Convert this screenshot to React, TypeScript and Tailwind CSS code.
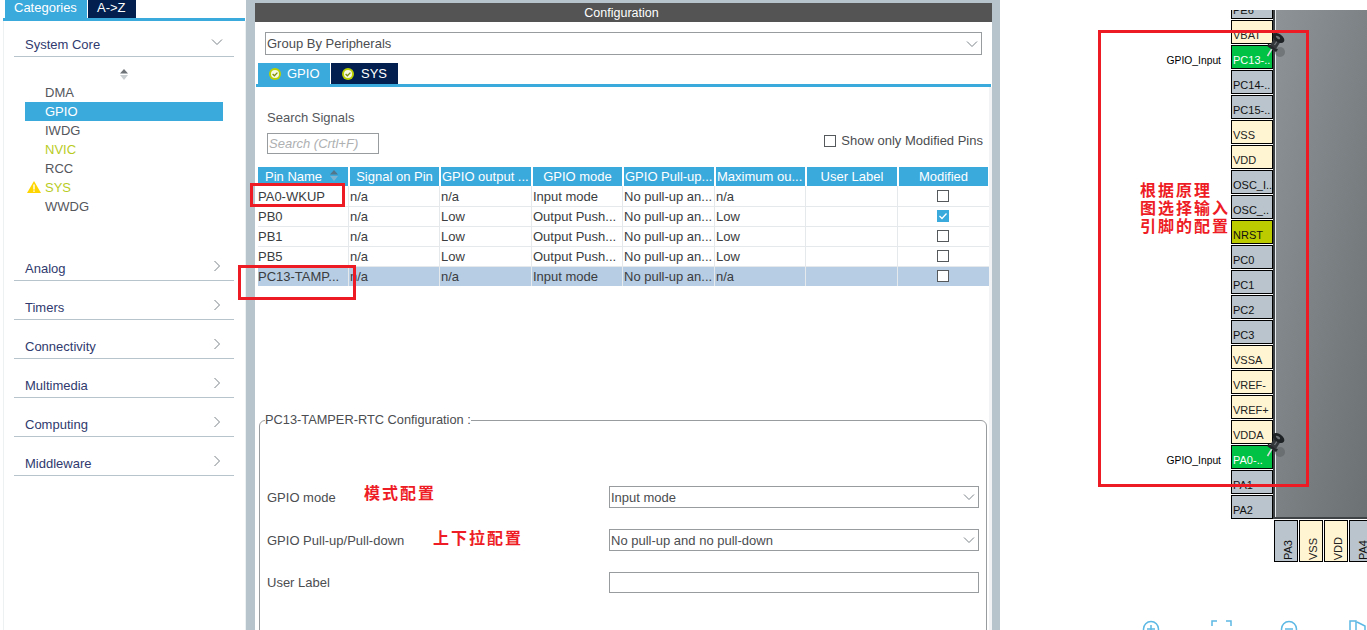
import React from "react";

const FONT = { fontFamily: '"Liberation Sans", Arial, sans-serif' };
const CJK = { fontFamily: '"Noto Sans CJK SC", "Liberation Serif", serif' };

function Chevron({ dir }: { dir: "down" | "right" }) {
  return (
    <svg width="12" height="12" viewBox="0 0 12 12" fill="none" stroke="#7d8388" strokeWidth="1" className="shrink-0">
      {dir === "down" ? <polyline points="1,3.5 6,8.5 11,3.5" /> : <polyline points="3.5,1 8.5,6 3.5,11" />}
    </svg>
  );
}

function CheckBadge() {
  return (
    <svg width="12" height="12" viewBox="0 0 12 12" className="shrink-0">
      <circle cx="6" cy="6" r="6" fill="#bcd200" />
      <circle cx="6" cy="6" r="4" fill="#f7f9e2" />
      <polyline points="3.6,6 5.4,7.8 8.4,4.6" fill="none" stroke="#7f8f10" strokeWidth="1.3" />
    </svg>
  );
}

function Checkbox({ checked }: { checked?: boolean }) {
  return checked ? (
    <span className="flex h-[12px] w-[12px] items-center justify-center bg-[#3aa9dc]">
      <svg width="10" height="10" viewBox="0 0 10 10" fill="none" stroke="#ffffff" strokeWidth="1.3">
        <polyline points="1.5,5 4,7.5 8.5,2.5" />
      </svg>
    </span>
  ) : (
    <span className="block h-[12px] w-[12px] border border-[#55595c] bg-white" />
  );
}

function Section({ title }: { title: string }) {
  return (
    <div className="flex h-[39px] items-end justify-between border-b border-[#b8c4cc] pb-[3px] pl-[11px] pr-[11px] text-[13px] text-[#303a6e]">
      <span className="leading-[16px]">{title}</span>
      <span className="mb-[5px]">
        <Chevron dir="right" />
      </span>
    </div>
  );
}

const items: [string, string][] = [
  ["DMA", "text-[#54565c]"],
  ["GPIO", "bg-[#3aa9dc] text-white"],
  ["IWDG", "text-[#54565c]"],
  ["NVIC", "text-[#b9cc1f]"],
  ["RCC", "text-[#54565c]"],
  ["SYS", "text-[#b9cc1f]"],
  ["WWDG", "text-[#54565c]"],
];

function Sidebar() {
  return (
    <aside className="h-full w-[246px] shrink-0 bg-white pl-[3px]">
      <div className="flex h-[18px] gap-[1px] pl-[2px] text-[13px] leading-[15px] text-white">
        <div className="w-[82px] bg-[#3aa9dc] pl-[9px]">Categories</div>
        <div className="w-[48px] bg-[#021f50] pl-[9px]">A-&gt;Z</div>
      </div>
      <div className="h-[3px] w-[242px] bg-[#3aa9dc]" />
      <div className="h-[609px] w-[243px] border-x border-[#eef1f2] pl-[10px] pr-[11px]">
        <div className="flex h-[36px] items-end justify-between border-b border-[#b8c4cc] pb-[3px] pl-[11px] pr-[11px] text-[13px] text-[#303a6e]">
          <span className="leading-[16px]">System Core</span>
          <span className="mb-[5px]">
            <Chevron dir="down" />
          </span>
        </div>
        <div className="h-[185px] pl-[11px]">
          <div className="flex h-[26px] w-[198px] items-center justify-center pt-[8px]">
            <svg width="10" height="11" viewBox="0 0 10 11">
              <polygon points="5,0 9,4.5 1,4.5" fill="#6d7377" />
              <polygon points="5,11 9,6 1,6" fill="#c9ced1" />
            </svg>
          </div>
          {items.map(([name, cls]) => (
            <div key={name} className={`relative h-[19px] w-[198px] pl-[20px] text-[13px] leading-[19px] ${cls}`}>
              {name === "SYS" && (
                <svg width="14" height="12" viewBox="0 0 14 12" className="absolute left-[2px] top-[3px]">
                  <polygon points="7,0 14,12 0,12" fill="#ffd500" />
                  <rect x="6.3" y="3.5" width="1.4" height="5" fill="#ffffff" />
                  <rect x="6.3" y="9.4" width="1.4" height="1.4" fill="#ffffff" />
                </svg>
              )}
              {name}
            </div>
          ))}
        </div>
        {["Analog", "Timers", "Connectivity", "Multimedia", "Computing", "Middleware"].map((t) => (
          <Section key={t} title={t} />
        ))}
      </div>
    </aside>
  );
}

const headers = ["Pin Name", "Signal on Pin", "GPIO output ...", "GPIO mode", "GPIO Pull-up...", "Maximum ou...", "User Label", "Modified"];
const rows = [
  ["PA0-WKUP", "n/a", "n/a", "Input mode", "No pull-up an...", "n/a", "", false],
  ["PB0", "n/a", "Low", "Output Push...", "No pull-up an...", "Low", "", true],
  ["PB1", "n/a", "Low", "Output Push...", "No pull-up an...", "Low", "", false],
  ["PB5", "n/a", "Low", "Output Push...", "No pull-up an...", "Low", "", false],
  ["PC13-TAMP...", "n/a", "n/a", "Input mode", "No pull-up an...", "n/a", "", false],
] as const;

function SelectBox({ value, className }: { value: string; className: string }) {
  return (
    <div className={`flex items-center justify-between border border-[#999c9e] bg-white pl-[1px] pr-[3px] text-[13px] text-[#4b4d50] ${className}`}>
      <span className="pt-[1px]">{value}</span>
      <Chevron dir="down" />
    </div>
  );
}

function Table() {
  return (
    <div className="ml-[3px] mt-[13px] w-[731px] text-[13px] text-[#3a3c40]">
      <div className="grid h-[19px] grid-cols-[92px_91px_92px_91px_92px_91px_92px_90px]">
        {headers.map((h, i) => (
          <div
            key={h}
            className={`relative bg-[#3aa9dc] leading-[19px] text-white ${i === 7 ? "mr-[1px]" : "mr-[2px]"} ${i === 0 ? "pl-[7px]" : i === 2 || i === 4 || i === 5 ? "pl-[1px]" : "text-center"}`}
          >
            {h}
            {i === 0 && (
              <svg width="10" height="11" viewBox="0 0 10 11" className="absolute left-[71px] top-[3px]">
                <polygon points="5,0 9,4.5 1,4.5" fill="#54768a" />
                <polygon points="5,11 9,6 1,6" fill="#7fb4d0" />
              </svg>
            )}
          </div>
        ))}
      </div>
      {rows.map((r, ri) => (
        <div
          key={ri}
          className={`grid h-[20px] grid-cols-[92px_91px_92px_91px_92px_91px_92px_90px] ${ri > 0 ? "shadow-[inset_0_1px_0_#e6e9ec]" : ""} ${ri === 4 ? "bg-[#b7cde4]" : ""}`}
        >
          {r.map((c, ci) =>
            ci === 7 ? (
              <div key={ci} className="flex items-center justify-center pr-[2px]">
                <Checkbox checked={c === true} />
              </div>
            ) : (
              <div key={ci} className="mr-[1px] overflow-hidden whitespace-nowrap border-r border-[#e6e9ec] leading-[21px]">
                {c}
              </div>
            ),
          )}
        </div>
      ))}
    </div>
  );
}

function Config() {
  return (
    <main className="h-full w-[737px] shrink-0 bg-white">
      <div className="flex h-[19px] items-center justify-center bg-[#535453] pr-[4px] pt-[1px] text-[12.5px] text-white">Configuration</div>
      <div className="px-[10px] pt-[10px]">
        <SelectBox value="Group By Peripherals" className="h-[23px] w-[717px]" />
      </div>
      <div className="ml-[3px] mt-[8px] flex h-[21px] gap-[1px] text-[13px] text-white">
        <div className="flex w-[72px] items-center gap-[6px] bg-[#3aa9dc] pl-[11px]">
          <CheckBadge />
          GPIO
        </div>
        <div className="flex w-[67px] items-center gap-[7px] bg-[#021f50] pl-[11px]">
          <CheckBadge />
          SYS
        </div>
      </div>
      <div className="ml-[1px] h-[3px] w-[735px] bg-[#3aa9dc]" />
      <div className="h-[600px] border-r-[3px] border-[#f1f3f4]">
        <div className="pl-[12px] pt-[23px] text-[13px] leading-[16px] text-[#55575c]">Search Signals</div>
        <div className="flex h-[28px] items-end justify-between pl-[12px] pr-[6px]">
          <div className="flex h-[21px] w-[112px] items-center border border-[#999c9e] pl-[1px] text-[13px] italic text-[#aeb0b2]">Search (Crtl+F)</div>
          <label className="mb-[6px] flex h-[15px] items-center gap-[5px] text-[13px] leading-[15px] text-[#4b4d50]">
            <Checkbox />
            Show only Modified Pins
          </label>
        </div>
        <Table />
        <fieldset className="ml-[4px] mt-[126px] h-[260px] w-[728px] rounded-[6px] border border-[#999c9e] pl-[5px]">
          <legend className="text-[12.8px] leading-[16px] text-[#4b4d50]">PC13-TAMPER-RTC Configuration :</legend>
          <div className="text-[13px] text-[#4b4d50]">
            <div className="mt-[58px] flex h-[22px] items-center justify-between pr-[7px]">
              <span className="pl-[2px] pt-[1px]">GPIO mode</span>
              <SelectBox value="Input mode" className="h-[22px] w-[370px]" />
            </div>
            <div className="mt-[21px] flex h-[22px] items-center justify-between pr-[7px]">
              <span className="pl-[2px] pt-[1px]">GPIO Pull-up/Pull-down</span>
              <SelectBox value="No pull-up and no pull-down" className="h-[22px] w-[370px]" />
            </div>
            <div className="mt-[21px] flex h-[21px] items-center justify-between pr-[7px]">
              <span className="pl-[2px] pt-[1px]">User Label</span>
              <div className="h-[21px] w-[370px] border border-[#999c9e]" />
            </div>
          </div>
        </fieldset>
      </div>
    </main>
  );
}

function PushPin({ className }: { className: string }) {
  return (
    <svg width="22" height="26" viewBox="0 0 22 26" className={className}>
      <ellipse cx="16" cy="19" rx="5" ry="5" fill="#585c5e" opacity="0.5" />
      <line x1="3.5" y1="23" x2="8.5" y2="15" stroke="#d5d9db" strokeWidth="1.6" />
      <path d="M4 10.5 L14 16.5 L12 19 L3.5 13.5 Z" fill="#26292b" />
      <line x1="9" y1="14" x2="13.5" y2="7" stroke="#34383a" strokeWidth="7" />
      <line x1="10.5" y1="12" x2="13.5" y2="7.5" stroke="#777c80" strokeWidth="1.2" />
      <ellipse cx="14.5" cy="5" rx="6.5" ry="4" transform="rotate(35 14.5 5)" fill="#1f2224" />
      <ellipse cx="14" cy="4.5" rx="2.5" ry="1.2" transform="rotate(35 14 4.5)" fill="#6d7276" />
    </svg>
  );
}

const pins: [string, string][] = [
  ["VBAT", "y"],
  ["PC13-..", "g"],
  ["PC14-..", "n"],
  ["PC15-..", "n"],
  ["VSS", "y"],
  ["VDD", "y"],
  ["OSC_I..", "n"],
  ["OSC_..", "n"],
  ["NRST", "l"],
  ["PC0", "n"],
  ["PC1", "n"],
  ["PC2", "n"],
  ["PC3", "n"],
  ["VSSA", "y"],
  ["VREF-", "y"],
  ["VREF+", "y"],
  ["VDDA", "y"],
  ["PA0-..", "g"],
  ["PA1", "n"],
  ["PA2", "n"],
];

const pinCls: Record<string, string> = {
  y: "bg-[#fff5d2] text-[#222]",
  n: "bg-[#b9c4cc] text-[#111]",
  g: "bg-[#00c244] text-white",
  l: "bg-[#bccb00] text-[#111]",
};

function Chip() {
  return (
    <section className="relative h-full flex-1 bg-white" style={FONT}>
      <div className="flex h-[562px] pt-[10px]">
        <div className="w-[273px] shrink-0">
          <div className="ml-[231px] flex h-[9px] w-[42px] items-end overflow-hidden border-x border-b border-black bg-[#b9c4cc] pl-[1px] text-[11px] leading-[12px] text-[#111]">
            <span className="mb-[2px]">PE6</span>
          </div>
          <div className="h-[1px]" />
          {pins.map(([name, kind]) => (
            <div key={name} className="flex h-[25px] items-start justify-end">
              {kind === "g" && <span className="mr-[10px] mt-[9px] text-[10.3px] leading-[13px] text-black">GPIO_Input</span>}
              <div className={`h-[24px] w-[42px] border border-black pl-[1px] pt-[8px] text-[11px] leading-[13px] ${pinCls[kind]}`}>{name}</div>
            </div>
          ))}
        </div>
        <div className="flex-1">
          <div className="h-[509px] border-b-2 border-l-2 border-[#3f4244] bg-gradient-to-br from-[#8d9397] to-[#6b7072] shadow-[inset_1px_0_0_#e8ecee]" />
          <div className="ml-[1px] mt-[1px] flex gap-[1px]">
            {[
              ["PA3", "n"],
              ["VSS", "y"],
              ["VDD", "y"],
              ["PA4", "n"],
            ].map(([n, k]) => (
              <div key={n} className={`flex h-[42px] w-[24px] shrink-0 items-end justify-center border border-black pb-[1px] pl-[3px] text-[11px] leading-[14px] ${pinCls[k]}`}>
                <span className="rotate-180 [writing-mode:vertical-rl]">{n}</span>
              </div>
            ))}
          </div>
        </div>
      </div>
      <PushPin className="absolute left-[264px] top-[33px]" />
      <PushPin className="absolute left-[264px] top-[433px]" />
      <div className="mt-[58px] flex items-start">
        <svg width="367" height="12" viewBox="0 0 367 12" fill="none" stroke="#5cb8e4" strokeWidth="1.5">
          <circle cx="151" cy="9" r="7.5" />
          <path d="M147 9h8M151 5v8" />
          <path d="M212 6V1h5M226 1h5v5" />
          <circle cx="289" cy="9" r="7.5" />
          <path d="M285 9h8" />
          <path d="M350 12V1h6v11M357 2l8 4v6" />
        </svg>
      </div>
    </section>
  );
}

function RedBox({ className }: { className: string }) {
  return <div className={`pointer-events-none absolute border-[3px] border-[#ed1c24] ${className}`} />;
}

function Note({ className, children }: { className: string; children: React.ReactNode }) {
  return (
    <div className={`absolute whitespace-nowrap text-[16px] font-bold leading-[18px] tracking-[2px] text-[#ee1c25] ${className}`} style={CJK}>
      {children}
    </div>
  );
}

export default function App() {
  return (
    <div className="relative flex h-[630px] w-[1367px] overflow-hidden bg-white" style={FONT}>
      <Sidebar />
      <div className="h-full w-[9px] shrink-0 bg-[#b8c4cc]" />
      <div className="h-full w-[737px] shrink-0 border-t-[3px] border-[#b8c4cc]">
        <Config />
      </div>
      <div className="h-full w-[8px] shrink-0 bg-[#b8c4cc]" />
      <Chip />
      <RedBox className="left-[250px] top-[183px] h-[24px] w-[95px]" />
      <RedBox className="left-[238px] top-[265px] h-[35px] w-[118px]" />
      <RedBox className="left-[1098px] top-[30px] h-[457px] w-[211px]" />
      <Note className="left-[1140px] top-[180px]">
        根据原理
        <br />
        图选择输入
        <br />
        引脚的配置
      </Note>
      <Note className="left-[364px] top-[483px]">模式配置</Note>
      <Note className="left-[433px] top-[528px]">上下拉配置</Note>
    </div>
  );
}
